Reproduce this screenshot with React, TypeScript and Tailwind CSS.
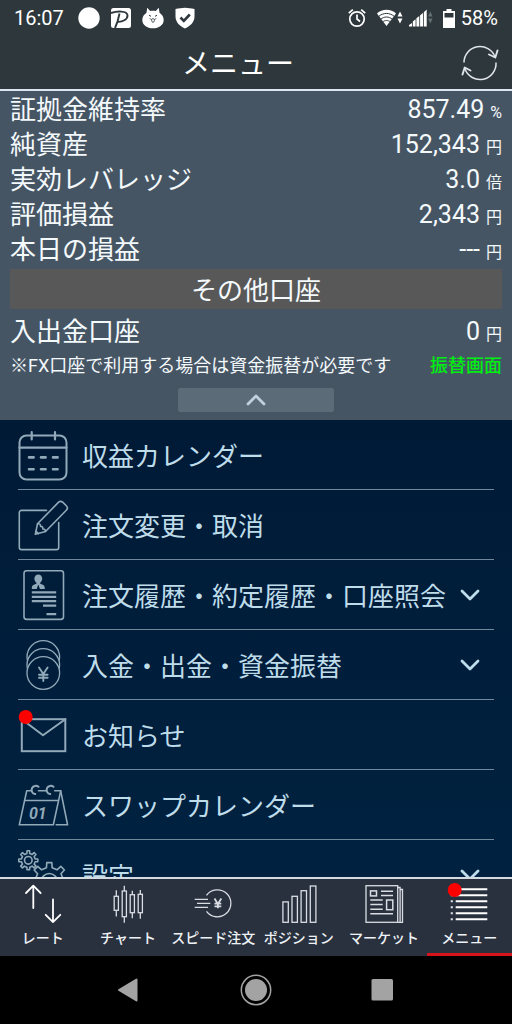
import type { ReactNode } from "react";
import { useState } from "react";

// ─── Types ────────────────────────────────────────────────────────────────────

type SummaryItem = {
  label: string;
  value: string;
  unit: string;
};

type MenuItem = {
  label: string;
  icon: ReactNode;
  expandable?: boolean;
};

type TabItem = {
  label: string;
  icon: ReactNode;
};

// ─── Helpers ──────────────────────────────────────────────────────────────────

const gearPath = (cx: number, cy: number, outer: number, inner: number, teeth = 8) => {
  const step = (Math.PI * 2) / teeth;
  const point = (r: number, a: number) =>
    `${(cx + r * Math.sin(a)).toFixed(2)} ${(cy - r * Math.cos(a)).toFixed(2)}`;
  const points: string[] = [];
  for (let i = 0; i < teeth; i++) {
    const a = i * step;
    points.push(point(inner, a - step * 0.26));
    points.push(point(outer, a - step * 0.17));
    points.push(point(outer, a + step * 0.17));
    points.push(point(inner, a + step * 0.26));
  }
  return `M${points.join("L")}Z`;
};

// ─── Menu icons ───────────────────────────────────────────────────────────────

const MenuIcon = ({ children }: { children: ReactNode }) => (
  <svg
    viewBox="0 0 50 50"
    className="size-[50px] shrink-0 overflow-visible text-[#91a9b8]"
    fill="none"
    stroke="currentColor"
    strokeWidth="1.6"
    strokeLinecap="round"
    strokeLinejoin="round"
    aria-hidden="true"
  >
    {children}
  </svg>
);

const CalendarIcon = () => (
  <MenuIcon>
    <rect x="1.5" y="5.5" width="47" height="44" rx="7" strokeWidth="2" />
    <path d="M1.5 17.7h47M13.7 2v7.5M37 2v7.5" strokeWidth="2.2" />
    <path
      d="M11 27.4h4.6M23 27.4h4.6M35 27.4h4.6M11 39.3h4.6M23 39.3h4.6M35 39.3h4.6"
      strokeWidth="2.6"
    />
  </MenuIcon>
);

const EditIcon = () => (
  <MenuIcon>
    <path d="M28.5 10.4h-25a2.2 2.2 0 0 0-2.2 2.2v34.8a2.2 2.2 0 0 0 2.2 2.2h35a2.2 2.2 0 0 0 2.2-2.2V22.5" />
    <path d="M17.3 34.3l2.2-10.5L40.4 2.4a3.2 3.2 0 0 1 4.5 0l3.4 3.4a3.2 3.2 0 0 1 0 4.5L27.5 31.5z" />
    <path d="M19.5 23.8c2.2-.4 3.2.7 3 2.6 1.9-.1 2.6.9 2.3 2.6 1.6-.2 2.7.8 2.7 2.5M17.8 31.2l2.6 2.4" />
  </MenuIcon>
);

const HistoryIcon = () => (
  <MenuIcon>
    <rect x="6" y="0.8" width="39.5" height="48.6" rx="2.6" />
    <path
      d="M20.3 4.6c2.4 0 3.9 1.7 3.9 4 0 2-.9 3.4-2 4.2v.9l2.6 1c1.4.5 2 1.7 2 4.3h-13c0-2.6.6-3.8 2-4.3l2.6-1v-.9c-1.1-.8-2-2.2-2-4.2 0-2.3 1.5-4 3.9-4z"
      fill="currentColor"
      stroke="none"
    />
    <path d="M20.3 14.5l-1.6 4.5h3.2z" fill="#001d3a" stroke="none" />
    <path
      d="M13.8 22.4h24.4M13.8 26.8h24.4M13.8 31.2h24.4M25 35.7h13.2M28.5 44.2h9.7"
      strokeWidth="2.2"
      strokeLinecap="butt"
    />
  </MenuIcon>
);

const CoinsIcon = () => (
  <MenuIcon>
    <circle cx="25.3" cy="17" r="16.3" strokeWidth="1.3" />
    <circle cx="25.3" cy="25" r="16.3" strokeWidth="1.3" fill="#001e3b" />
    <circle cx="25.3" cy="33" r="16.3" strokeWidth="1.3" fill="#001e3b" />
    <path d="M21 27.5l4.3 6.5 4.3-6.5M25.3 34v7M21 34.7h8.6M21 37.7h8.6" strokeWidth="1.9" />
  </MenuIcon>
);

const MailIcon = () => (
  <MenuIcon>
    <rect x="3.8" y="9.2" width="43.5" height="32" strokeWidth="2" strokeLinejoin="miter" />
    <path d="M3.8 9.2L25 25.3 47.3 9.2" strokeWidth="2" />
    <circle cx="7.7" cy="7" r="7" fill="#ff0000" stroke="none" />
  </MenuIcon>
);

const SwapCalendarIcon = () => (
  <MenuIcon>
    <path d="M13.5 10.8H8.7L1.3 44.8h34l7.4-34h-6M20.5 10.8H28" />
    <path d="M42.7 10.8l6.9 34H38.2M6.6 20.5h33.7" />
    <path
      d="M20.5 6.8c-2-1.6-5.2-1.1-6.4 1.2-1.4 2.6.2 5.7 3.1 6.1M35.5 6.8c-2-1.6-5.2-1.1-6.4 1.2-1.4 2.6.2 5.7 3.1 6.1"
      strokeWidth="2"
    />
    <text
      x="19.8"
      y="38.5"
      textAnchor="middle"
      fill="currentColor"
      stroke="none"
      className="font-[Roboto] text-[16px] font-bold italic"
    >
      01
    </text>
  </MenuIcon>
);

const GearsIcon = () => (
  <MenuIcon>
    <path d={gearPath(10.3, 10.3, 9.6, 7)} />
    <circle cx="10.3" cy="10.3" r="3.8" />
    <path d={gearPath(31.3, 31.5, 19, 14)} />
    <circle cx="31.3" cy="31.5" r="8" />
  </MenuIcon>
);

// ─── Tab icons ────────────────────────────────────────────────────────────────

const TabIcon = ({ children }: { children: ReactNode }) => (
  <svg
    viewBox="0 0 40 40"
    className="size-10 shrink-0 overflow-visible text-[#d9dde3]"
    fill="none"
    stroke="currentColor"
    strokeWidth="1.3"
    aria-hidden="true"
  >
    {children}
  </svg>
);

const RateIcon = () => (
  <TabIcon>
    <g stroke="#ffffff" strokeWidth="1.8" strokeLinecap="round" strokeLinejoin="round">
      <path d="M10.3 24V2M3 9l7.3-7.3L17.6 9" />
      <path d="M30 15.5V38M22.7 30.8l7.3 7.3 7.3-7.3" />
    </g>
  </TabIcon>
);

const ChartIcon = () => (
  <TabIcon>
    <rect x="6.2" y="12.3" width="4.2" height="14" />
    <rect x="14.2" y="7" width="4.2" height="25.7" />
    <rect x="22.2" y="10.7" width="4.2" height="18" />
    <rect x="30.2" y="10.3" width="4.2" height="18.4" />
    <path d="M8.3 6.3v6M8.3 26.3v6.2M16.3 1.7V7M16.3 32.7v6M24.3 6.7v4M24.3 28.7v5.6M32.3 6v4.3M32.3 28.7v6" />
  </TabIcon>
);

const SpeedIcon = () => (
  <TabIcon>
    <path d="M13.5 11.3a13.5 13.5 0 1 1 0 16" />
    <path d="M1.7 15.3H15M4 19.3h13.3M1.7 23.3H15" />
    <path d="M21.5 14.5l3.4 5.5 3.4-5.5M24.9 20v4.3M21.5 19.7h6.8M21.5 22.3h6.8" strokeWidth="1.8" />
  </TabIcon>
);

const PositionIcon = () => (
  <TabIcon>
    <rect x="3.9" y="17.9" width="5.4" height="20.4" />
    <rect x="13" y="12.3" width="5.4" height="26" />
    <rect x="22.1" y="6.7" width="5.4" height="31.6" />
    <rect x="31.3" y="2" width="5.6" height="36.3" />
  </TabIcon>
);

const MarketIcon = () => (
  <TabIcon>
    <rect x="2" y="1.7" width="31.7" height="36.6" />
    <path d="M33.7 3.5h2.4v34.8M36.1 5.5h2.4v32.8h-5" />
    <rect x="6.5" y="6.9" width="6" height="5" strokeWidth="1.5" />
    <rect x="22.6" y="16" width="6.2" height="9.7" strokeWidth="1.5" />
    <path
      d="M17 7.2h12M17 11.5h12M6.3 16h12.4M6.3 20.6h12.4M6.3 25.2h12.4M6.3 29.8H29"
      strokeWidth="1.5"
    />
  </TabIcon>
);

const ListIcon = () => (
  <TabIcon>
    <path
      d="M6.7 5.3h31.6M6.7 11.3h31.6M6.7 17.3h31.6M6.7 23.3h31.6M6.7 29.3h31.6M6.7 35.2h31.6"
      stroke="#ffffff"
      strokeWidth="1.9"
    />
    <path
      d="M1.7 11.3h2.2M1.7 17.3h2.2M1.7 23.3h2.2M1.7 29.3h2.2M1.7 35.2h2.2"
      strokeWidth="1.9"
    />
    <circle cx="5.7" cy="6" r="7" fill="#ff0000" stroke="none" />
  </TabIcon>
);

// ─── Data ─────────────────────────────────────────────────────────────────────

const SUMMARY: SummaryItem[] = [
  { label: "証拠金維持率", value: "857.49", unit: "%" },
  { label: "純資産", value: "152,343", unit: "円" },
  { label: "実効レバレッジ", value: "3.0", unit: "倍" },
  { label: "評価損益", value: "2,343", unit: "円" },
  { label: "本日の損益", value: "---", unit: "円" },
];

const MENU: MenuItem[] = [
  { label: "収益カレンダー", icon: <CalendarIcon /> },
  { label: "注文変更・取消", icon: <EditIcon /> },
  { label: "注文履歴・約定履歴・口座照会", icon: <HistoryIcon />, expandable: true },
  { label: "入金・出金・資金振替", icon: <CoinsIcon />, expandable: true },
  { label: "お知らせ", icon: <MailIcon /> },
  { label: "スワップカレンダー", icon: <SwapCalendarIcon /> },
  { label: "設定", icon: <GearsIcon />, expandable: true },
];

const TABS: TabItem[] = [
  { label: "レート", icon: <RateIcon /> },
  { label: "チャート", icon: <ChartIcon /> },
  { label: "スピード注文", icon: <SpeedIcon /> },
  { label: "ポジション", icon: <PositionIcon /> },
  { label: "マーケット", icon: <MarketIcon /> },
  { label: "メニュー", icon: <ListIcon /> },
];

// ─── Header ───────────────────────────────────────────────────────────────────

const StatusBar = () => (
  <div className="flex h-9 items-center justify-between px-[14px] text-[20px] leading-none">
    <div className="flex items-center gap-[10px]">
      <span className="mr-1">16:07</span>
      <svg viewBox="0 0 22 22" className="size-[22px]" aria-hidden="true">
        <circle cx="11" cy="11" r="10.7" fill="#fff" />
      </svg>
      <svg viewBox="0 0 22 22" className="size-[22px]" aria-hidden="true">
        <rect x="1" y="1" width="20" height="20" rx="2.5" fill="#fff" />
        <path
          d="M1 6c6-2 16-2.500 16.500 2.200C18 12.500 12 15.300 7.500 14.800M9.500 6.500C8.500 12 7 17 5 21"
          fill="none"
          stroke="#2e383c"
          strokeWidth="1.9"
        />
      </svg>
      <svg viewBox="0 0 22 22" className="size-[22px]" aria-hidden="true">
        <path
          d="M5.2.8l3 3.2c1.800-.5 3.800-.5 5.600 0l3-3.200.7 5C20 7.400 21.700 10 21.700 13c0 5-4.800 8.300-10.700 8.300S.3 18 .3 13c0-3 1.700-5.600 4.200-7.200z"
          fill="#fff"
        />
        <path
          d="M7 8.300l2 1M15 8.300l-2 1M8 11.500c.5 1.200 2.500 1.200 3 0 .5 1.200 2.500 1.200 3 0M9.600 13.300c.3 2.600 2.500 2.600 2.800 0"
          fill="none"
          stroke="#2e383c"
        />
      </svg>
      <svg viewBox="0 0 22 22" className="size-[22px]" aria-hidden="true">
        <path
          d="M1.500 2C5 1.500 8 1 11 .8c3 .2 6 .7 9.500 1.200v7.500c0 5.500-4 9.500-9.500 12-5.500-2.500-9.500-6.500-9.500-12z"
          fill="#fff"
        />
        <path d="M6.500 10.500l3.300 3.300 6-6.300" fill="none" stroke="#2e383c" strokeWidth="2.6" />
      </svg>
    </div>
    <div className="flex items-center">
      <svg
        viewBox="0 0 18 20"
        className="mr-[11px] h-5 w-[18px]"
        fill="none"
        stroke="#fff"
        strokeWidth="1.7"
        aria-hidden="true"
      >
        <circle cx="9" cy="11" r="7.2" />
        <path d="M9 6.5V11l3 2.500M.8 5.200l4-3.500M17.200 5.200l-4-3.500" />
      </svg>
      <svg viewBox="0 0 26 18" className="mr-[6px] h-[18px] w-[26px]" aria-hidden="true">
        <path d="M0 4.500C5-.5 14-.5 19 4.500L9.500 17z" fill="#fff" />
        <path
          d="M1.500 7.600c4.500-4.200 11.500-4.200 16 0M3.500 10.400c3.500-3.200 8.500-3.200 12 0M5.500 13c2.500-2 5.500-2 8 0"
          fill="none"
          stroke="#2e383c"
        />
        <path d="M20.500 7.500l2.500-5 2.500 5zM20.500 9.500l2.500 5 2.500-5z" fill="#fff" />
      </svg>
      <svg viewBox="0 0 24 18" className="mr-[10px] h-[18px] w-6" aria-hidden="true">
        <path
          d="M0 17.500v-1.500l3-2v3.500zM3.800 17.500v-5l2.800-2.200v7.200zM7.400 17.500V9.300l2.900-2.200v10.400zM11.100 17.500V6.200L14 3.900v13.600zM14.800 17.500V3.200L17.700.5v17z"
          fill="#fff"
        />
        <path d="M19 7.500l2.300-5 2.300 5zM19 9.500l2.300 5 2.300-5z" fill="#657075" />
      </svg>
      <svg viewBox="0 0 12 19" className="mr-[6px] h-[19px] w-3" aria-hidden="true">
        <path d="M3.500 0h5v2H12v17H0V2h3.500z" fill="#fff" />
        <path d="M1.500 4h9v4.500h-9z" fill="#2e383c" />
      </svg>
      <span>58%</span>
    </div>
  </div>
);

const TitleBar = () => (
  <div className="flex h-[53px] items-center pr-[13px]">
    <h1 className="flex-1 pl-[15px] pt-1 text-center text-[28px] leading-none">メニュー</h1>
    <button type="button" aria-label="更新">
      <svg viewBox="0 0 38 38" className="size-[38px]" fill="none" stroke="#dfe5e8" strokeWidth="1.5">
        <path d="M3 18.500A16 16 0 0 1 34 13M35 18.500A16 16 0 0 1 4 25" />
        <path
          d="M28 10.500l6.300 3 2.200-7M9.500 26.500l-5.800-3-2.200 7"
          strokeWidth="1.9"
          strokeLinecap="round"
          strokeLinejoin="round"
        />
      </svg>
    </button>
  </div>
);

// ─── Account summary ──────────────────────────────────────────────────────────

const SummaryRow = ({ label, value, unit }: SummaryItem) => (
  <div className="flex h-[35px] items-center justify-between leading-none">
    <dt className="text-[26px]">{label}</dt>
    <dd className="flex items-baseline gap-[6px]">
      <span className="text-[25px]">{value}</span>
      <span className="text-base leading-none">{unit}</span>
    </dd>
  </div>
);

const Chevron = ({ className }: { className: string }) => (
  <svg
    viewBox="0 0 20 12"
    className={className}
    fill="none"
    strokeWidth="2.8"
    strokeLinecap="round"
    strokeLinejoin="round"
    aria-hidden="true"
  >
    <path d="M2 2l8 8 8-8" />
  </svg>
);

const AccountSummary = () => (
  <section className="shrink-0 bg-[#465564] px-[10px] pt-px pb-2 text-[#f4f9fc]">
    <dl>
      {SUMMARY.map(item => (
        <SummaryRow key={item.label} {...item} />
      ))}
    </dl>
    <h2 className="mt-[2px] mb-[5px] flex h-10 items-center justify-center bg-[#585858] pt-1 text-[26px] leading-none">
      その他口座
    </h2>
    <dl>
      <SummaryRow label="入出金口座" value="0" unit="円" />
    </dl>
    <div className="flex h-8 items-center justify-between pt-[2px] text-[18px] leading-none">
      <p>※FX口座で利用する場合は資金振替が必要です</p>
      <a href="#transfer" className="font-medium text-[#00ee11]">
        振替画面
      </a>
    </div>
    <button
      type="button"
      aria-label="閉じる"
      className="mx-auto mt-[7px] flex h-6 w-[156px] items-center justify-center rounded-xs bg-[#5b6b78]"
    >
      <Chevron className="h-3 w-5 rotate-180 stroke-[#c2d2dd]" />
    </button>
  </section>
);

// ─── Menu ─────────────────────────────────────────────────────────────────────

const MenuList = () => (
  <main className="min-h-0 flex-1 overflow-hidden bg-linear-to-b from-[#001a36] to-[#002240]">
    <ul className="px-[18px]">
      {MENU.map(item => (
        <li key={item.label} className="border-b border-[#71889a]">
          <button type="button" className="flex h-[69px] w-full items-center text-left text-[#bfdcea]">
            {item.icon}
            <span className="ml-[14px] flex-1 whitespace-nowrap pt-1 text-[26px] leading-none">
              {item.label}
            </span>
            {item.expandable && <Chevron className="mr-[14px] h-3 w-5 shrink-0 stroke-[#bfdcea]" />}
          </button>
        </li>
      ))}
    </ul>
  </main>
);

// ─── Bottom bars ──────────────────────────────────────────────────────────────

const TabBar = () => {
  const [activeIndex, setActiveIndex] = useState(5);

  return (
    <nav className="grid shrink-0 grid-cols-6 border-t-2 border-[#d5dbe3] bg-[#29313f]">
      {TABS.map((tab, i) => (
        <button
          key={tab.label}
          type="button"
          onClick={() => setActiveIndex(i)}
          className={`flex h-[77px] flex-col items-center border-b-3 pt-[5px] ${
            i === activeIndex ? "border-[#d8131c]" : "border-transparent"
          }`}
        >
          {tab.icon}
          <span className="mt-[7px] whitespace-nowrap text-sm font-medium leading-none text-[#eef1f5]">
            {tab.label}
          </span>
        </button>
      ))}
    </nav>
  );
};

const SystemNav = () => (
  <div className="flex h-[68px] shrink-0 items-center justify-center gap-24 bg-black">
    <button type="button" aria-label="戻る">
      <svg viewBox="0 0 32 32" className="size-8">
        <path
          d="M24.500 5.500v21L7 16z"
          fill="#a3a3a3"
          stroke="#a3a3a3"
          strokeWidth="2"
          strokeLinejoin="round"
        />
      </svg>
    </button>
    <button type="button" aria-label="ホーム">
      <svg viewBox="0 0 32 32" className="size-8">
        <circle cx="16" cy="16" r="14.7" fill="none" stroke="#a3a3a3" strokeWidth="1.5" />
        <circle cx="16" cy="16" r="11" fill="#a3a3a3" />
      </svg>
    </button>
    <button type="button" aria-label="履歴">
      <svg viewBox="0 0 32 32" className="size-8">
        <rect x="3.5" y="5" width="21.5" height="21.5" rx="1.5" fill="#a3a3a3" />
      </svg>
    </button>
  </div>
);

// ─── App ──────────────────────────────────────────────────────────────────────

const App = () => (
  <div
    lang="ja"
    className="flex h-screen flex-col overflow-hidden bg-black font-[Roboto,'Noto_Sans_CJK_JP',sans-serif] text-white"
  >
    <header className="shrink-0 border-b-2 border-[#dde6f0] bg-[#2e383c]">
      <StatusBar />
      <TitleBar />
    </header>
    <AccountSummary />
    <MenuList />
    <TabBar />
    <SystemNav />
  </div>
);

export default App;
